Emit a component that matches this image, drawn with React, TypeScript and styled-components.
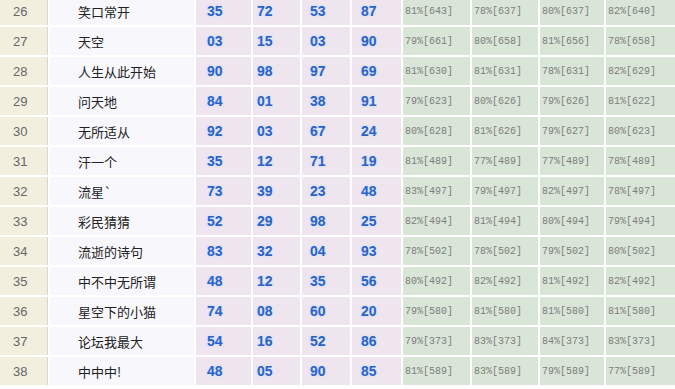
import React from 'react';
import styled, { createGlobalStyle } from 'styled-components';

const GlobalStyle = createGlobalStyle`
    html, body {
        margin: 0;
        padding: 0;
        background: #ffffff;
    }
    body {
        width: 675px;
        height: 389px;
        overflow: hidden;
        font-family: "Liberation Sans", "Noto Sans CJK SC", sans-serif;
    }
`;

const StyledTable = styled.div`
    margin-top: -3px;
    display: flex;
    flex-direction: column;
    row-gap: 2px;
    background: #ffffff;
    width: 675px;
`;

const StyledRow = styled.div`
    display: grid;
    grid-template-columns: 48px 144px 55px 47px 48px 49px 67px 66px 64px 71px;
    column-gap: 2px;
    height: 28px;
`;

const StyledIndex = styled.div`
    background: #f3efdf;
    border-right: 1px solid #d9d9c9;
    color: #666666;
    font-size: 13px;
    display: flex;
    align-items: center;
    padding-left: 13px;
`;

const StyledName = styled.div`
    background: #f8f8fc;
    color: #222222;
    font-family: "Noto Sans CJK SC", sans-serif;
    font-size: 13px;
    display: flex;
    align-items: center;
    padding-left: 28px;
    white-space: nowrap;
`;

const StyledNumber = styled.div<{ $pad: number }>`
    background: #eee5ef;
    color: #2b62c6;
    font-weight: bold;
    font-size: 14px;
    display: flex;
    align-items: center;
    padding-left: ${p => p.$pad}px;
    text-shadow: 0 0 3px #c9dcff, 0 0 2px #dbe8ff;
`;

const StyledRate = styled.div`
    background: #d9e5d7;
    color: #7d7d7d;
    font-family: "Liberation Mono", monospace;
    font-size: 10px;
    display: flex;
    align-items: center;
    padding-left: 2px;
    white-space: nowrap;
`;

type Row = {
    id: number;
    name: string;
    nums: string[];
    rates: string[];
};

const rows: Array<Row> = [
    { id: 26, name: '笑口常开', nums: ['35', '72', '53', '87'], rates: ['81%[643]', '78%[637]', '80%[637]', '82%[640]'] },
    { id: 27, name: '天空', nums: ['03', '15', '03', '90'], rates: ['79%[661]', '80%[658]', '81%[656]', '78%[658]'] },
    { id: 28, name: '人生从此开始', nums: ['90', '98', '97', '69'], rates: ['81%[630]', '81%[631]', '78%[631]', '82%[629]'] },
    { id: 29, name: '问天地', nums: ['84', '01', '38', '91'], rates: ['79%[623]', '80%[626]', '79%[626]', '81%[622]'] },
    { id: 30, name: '无所适从', nums: ['92', '03', '67', '24'], rates: ['80%[628]', '81%[626]', '79%[627]', '80%[623]'] },
    { id: 31, name: '汗一个', nums: ['35', '12', '71', '19'], rates: ['81%[489]', '77%[489]', '77%[489]', '78%[489]'] },
    { id: 32, name: '流星`', nums: ['73', '39', '23', '48'], rates: ['83%[497]', '79%[497]', '82%[497]', '78%[497]'] },
    { id: 33, name: '彩民猜猜', nums: ['52', '29', '98', '25'], rates: ['82%[494]', '81%[494]', '80%[494]', '79%[494]'] },
    { id: 34, name: '流逝的诗句', nums: ['83', '32', '04', '93'], rates: ['78%[502]', '78%[502]', '79%[502]', '80%[502]'] },
    { id: 35, name: '中不中无所谓', nums: ['48', '12', '35', '56'], rates: ['80%[492]', '82%[492]', '81%[492]', '82%[492]'] },
    { id: 36, name: '星空下的小猫', nums: ['74', '08', '60', '20'], rates: ['79%[580]', '81%[580]', '81%[580]', '81%[580]'] },
    { id: 37, name: '论坛我最大', nums: ['54', '16', '52', '86'], rates: ['79%[373]', '83%[373]', '84%[373]', '83%[373]'] },
    { id: 38, name: '中中中!', nums: ['48', '05', '90', '85'], rates: ['81%[589]', '83%[589]', '79%[589]', '77%[589]'] },
];

// left padding of each number column, so digits sit where the old table put them
const numberPads = [11, 4, 8, 9];

export default function App() {
    return (
        <>
            <GlobalStyle />
            <StyledTable>
                {rows.map(row => (
                    <StyledRow key={row.id}>
                        <StyledIndex>{row.id}</StyledIndex>
                        <StyledName>{row.name}</StyledName>
                        {row.nums.map((n, i) => (
                            <StyledNumber key={i} $pad={numberPads[i]}>{n}</StyledNumber>
                        ))}
                        {row.rates.map((r, i) => (
                            <StyledRate key={i}>{r}</StyledRate>
                        ))}
                    </StyledRow>
                ))}
            </StyledTable>
        </>
    );
}
